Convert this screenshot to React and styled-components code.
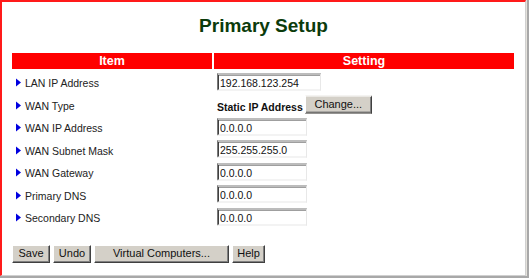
import React from 'react'
import styled, { createGlobalStyle } from 'styled-components'

const rows = [
  { label: 'LAN IP Address', value: '192.168.123.254', wide: true },
  { label: 'WAN Type', type: 'Static IP Address' },
  { label: 'WAN IP Address', value: '0.0.0.0' },
  { label: 'WAN Subnet Mask', value: '255.255.255.0' },
  { label: 'WAN Gateway', value: '0.0.0.0' },
  { label: 'Primary DNS', value: '0.0.0.0' },
  { label: 'Secondary DNS', value: '0.0.0.0' },
]

const App = () => (
  <>
    <GlobalStyle />
    <Window>
      <Page>
        <Title>Primary Setup</Title>
        <Table>
          <HeadCell>Item</HeadCell>
          <HeadCell>Setting</HeadCell>
          {rows.map(row => (
            <React.Fragment key={row.label}>
              <LabelCell>
                <Arrow />
                {row.label}
              </LabelCell>
              <ValueCell>
                {row.type ? (
                  <>
                    <TypeText>{row.type}</TypeText>
                    <Button>Change...</Button>
                  </>
                ) : (
                  <Field defaultValue={row.value} $wide={row.wide} />
                )}
              </ValueCell>
            </React.Fragment>
          ))}
        </Table>
        <Actions>
          <Button $w='38px'>Save</Button>
          <Button $w='38px'>Undo</Button>
          <Button $w='135px'>Virtual Computers...</Button>
          <Button $w='33px'>Help</Button>
        </Actions>
      </Page>
    </Window>
  </>
)

const GlobalStyle = createGlobalStyle`
  body {
    margin: 0;
    background: #fff;
    font-family: "Liberation Sans", Arial, sans-serif;
  }
`

const Window = styled.div`
  width: 529px;
  height: 278px;
  box-sizing: border-box;
  padding: 0 3px 2px 0;
  background: #d4d0c8;
  box-shadow: inset -2px -2px 0 #a8a8a8, inset -3px -3px 0 #e4e2dc;
`

const Page = styled.div`
  width: 526px;
  height: 276px;
  box-sizing: border-box;
  border-top: 2px solid #ff1a1a;
  border-left: 2px solid #ff1a1a;
  border-right: 1px solid #d0d0d0;
  border-bottom: 1px solid #d0d0d0;
  box-shadow: inset -1px -1px 0 #fff;
  background: #fff;
  padding: 0 0 0 10px;
`

const Title = styled.h1`
  margin: 0;
  padding: 13px 0 0;
  height: 40px;
  box-sizing: border-box;
  width: 503px;
  text-align: center;
  font-size: 19px;
  line-height: 22px;
  font-weight: bold;
  color: #0b3b0b;
`

const Table = styled.div`
  display: grid;
  grid-template-columns: 200px 300px;
  grid-template-rows: 16px repeat(7, 22.5px);
  column-gap: 2px;
  margin-top: 11px;
`

const HeadCell = styled.div`
  background: #ff0000;
  color: #fff;
  font-weight: bold;
  font-size: 12.5px;
  line-height: 16px;
  text-align: center;
`

const LabelCell = styled.div`
  display: flex;
  align-items: center;
  padding-left: 4px;
  padding-top: 2px;
  font-size: 10.5px;
  color: #222;
  transform: translateY(1.5px);
`

const Arrow = styled.span`
  width: 0;
  height: 0;
  border-top: 4px solid transparent;
  border-bottom: 4px solid transparent;
  border-left: 5px solid #0000e0;
  margin-right: 4px;
`

const ValueCell = styled.div`
  display: flex;
  align-items: center;
  padding-left: 3px;
  transform: translateY(1.5px);
`

const Field = styled.input`
  width: ${p => (p.$wide ? '104px' : '90px')};
  height: 17px;
  box-sizing: border-box;
  padding: 1px 2px 0;
  font-family: "Liberation Sans", Arial, sans-serif;
  font-size: 10.5px;
  color: #111;
  background: #fff;
  border: 1px solid;
  border-color: #7a7a7a #e8e8e8 #e8e8e8 #7a7a7a;
  box-shadow: inset 1px 1px 0 #404040;
  outline: none;
`

const TypeText = styled.span`
  font-size: 10.5px;
  font-weight: bold;
  color: #111;
  margin-right: 2px;
  transform: translateY(2px);
`

const Button = styled.button`
  width: ${p => p.$w || '67px'};
  height: 18px;
  box-sizing: border-box;
  padding: 0 0 2px;
  background: #d4d0c8;
  color: #111;
  font-family: "Liberation Sans", Arial, sans-serif;
  font-size: 11px;
  border: 1px solid;
  border-color: #fff #404040 #404040 #fff;
  box-shadow: inset -1px -1px 0 #808080;
  border-radius: 0;
`

const Actions = styled.div`
  display: flex;
  gap: 3px;
  margin-top: 18px;
  padding-left: 0;
`

export default App
